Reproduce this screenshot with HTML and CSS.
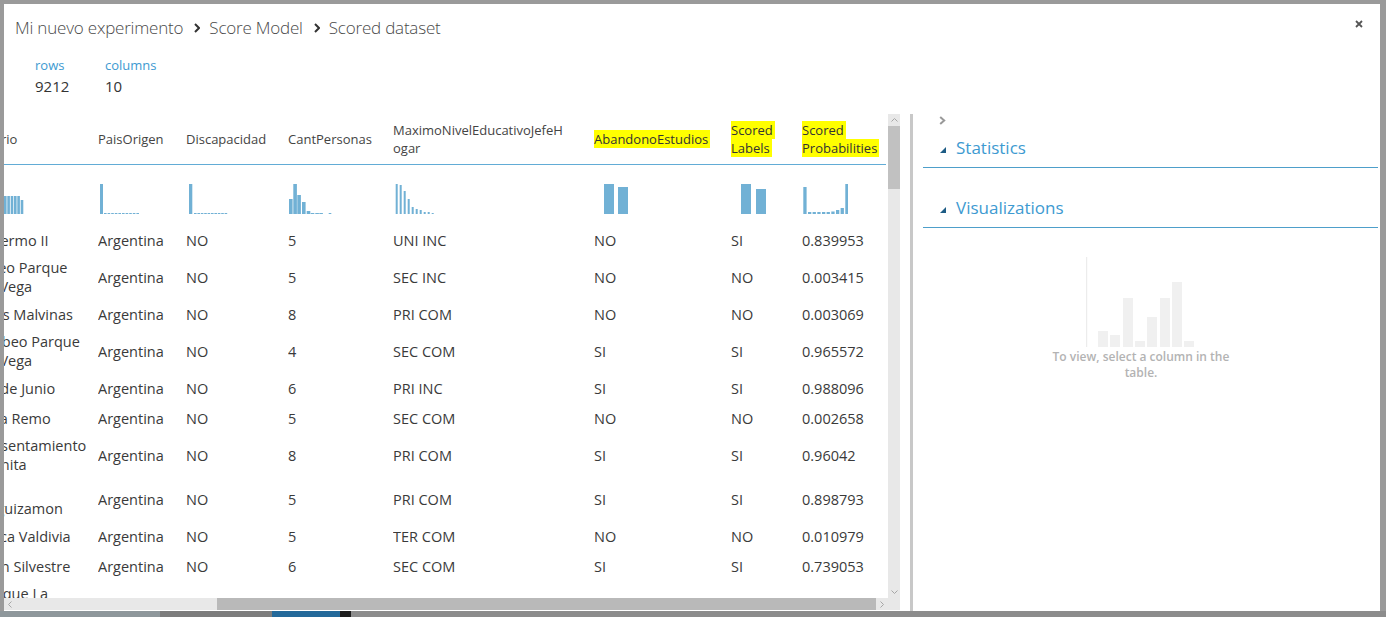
FILE: index.html
```html
<!DOCTYPE html>
<html lang="es">
<head>
<meta charset="utf-8">
<title>Scored dataset</title>
<link rel="stylesheet" href="styles.css">
</head>
<body>
<div class="modal">
  <header class="titlebar">
    <nav class="crumbs">
      <span>Mi nuevo experimento</span>
      <svg class="crumb-sep" width="6" height="10" viewBox="0 0 6 10"><polyline points="1,1 5,5 1,9" fill="none" stroke="#333" stroke-width="2"/></svg>
      <span>Score Model</span>
      <svg class="crumb-sep" width="6" height="10" viewBox="0 0 6 10"><polyline points="1,1 5,5 1,9" fill="none" stroke="#333" stroke-width="2"/></svg>
      <span>Scored dataset</span>
    </nav>
    <button class="close" aria-label="Cerrar"><svg width="8" height="8" viewBox="0 0 8 8"><path d="M1 1 L7 7 M7 1 L1 7" stroke="#555" stroke-width="1.8"/></svg></button>
  </header>

  <div class="stats">
    <div class="stat"><div class="stat-label">rows</div><div class="stat-value">9212</div></div>
    <div class="stat"><div class="stat-label">columns</div><div class="stat-value">10</div></div>
  </div>

  <div class="main">
    <div class="grid-pane">
      <div class="grid-top">
        <div class="viewport">
          <table class="grid">
            <colgroup>
              <col class="c0"><col class="c1"><col class="c2"><col class="c3"><col class="c4"><col class="c5"><col class="c6"><col class="c7">
            </colgroup>
            <thead>
              <tr>
                <th>Barrio</th>
                <th>PaisOrigen</th>
                <th>Discapacidad</th>
                <th>CantPersonas</th>
                <th>MaximoNivelEducativoJefeH<wbr>ogar</th>
                <th><span class="hl">AbandonoEstudios</span></th>
                <th><span class="hl">Scored Labels</span></th>
                <th class="last"><span class="hl">Scored Probabilities</span></th>
              </tr>
            </thead>
            <tbody>
              <tr class="hist">
                <td><svg width="44" height="30"><g fill="#71b1d5"><rect x="4" y="10" width="2.6" height="20"/><rect x="7.3" y="8" width="2.6" height="22"/><rect x="10.7" y="12" width="2.6" height="18"/><rect x="14" y="11" width="2.6" height="19"/><rect x="17.3" y="12" width="2.6" height="18"/><rect x="20.7" y="13" width="2.6" height="17"/><rect x="24" y="12" width="2.6" height="18"/><rect x="27.3" y="12" width="2.6" height="18"/><rect x="30.7" y="12" width="2.6" height="18"/><rect x="34" y="12" width="2.6" height="18"/><rect x="37.3" y="12" width="2.6" height="18"/><rect x="40.7" y="16" width="2.6" height="14"/></g></svg></td>
                <td><svg width="42" height="30"><g fill="#71b1d5"><rect x="2" y="0" width="3" height="30"/><rect x="6" y="29" width="2.6" height="1"/><rect x="9.6" y="29" width="2.6" height="1"/><rect x="13.2" y="29" width="2.6" height="1"/><rect x="16.8" y="29" width="2.6" height="1"/><rect x="20.4" y="29" width="2.6" height="1"/><rect x="24" y="29" width="2.6" height="1"/><rect x="27.6" y="29" width="2.6" height="1"/><rect x="31.2" y="29" width="2.6" height="1"/><rect x="34.8" y="29" width="2.6" height="1"/><rect x="38.4" y="29" width="2.6" height="1"/></g></svg></td>
                <td><svg width="42" height="30"><g fill="#71b1d5"><rect x="3" y="0" width="3.3" height="30"/><rect x="8" y="29" width="2.6" height="1"/><rect x="11.4" y="29" width="2.6" height="1"/><rect x="14.8" y="29" width="2.6" height="1"/><rect x="18.2" y="29" width="2.6" height="1"/><rect x="21.6" y="29" width="2.6" height="1"/><rect x="25" y="29" width="2.6" height="1"/><rect x="28.4" y="29" width="2.6" height="1"/><rect x="31.8" y="29" width="2.6" height="1"/><rect x="35.2" y="29" width="2.6" height="1"/><rect x="38.6" y="29" width="2.6" height="1"/></g></svg></td>
                <td><svg width="45" height="30"><g fill="#71b1d5"><rect x="1" y="15" width="3.6" height="15"/><rect x="5.3" y="0" width="3.6" height="30"/><rect x="9.3" y="11" width="3.6" height="19"/><rect x="14" y="18" width="3.6" height="12"/><rect x="18.7" y="27" width="3.6" height="3"/><rect x="22.7" y="29" width="3.6" height="1"/><rect x="27.3" y="29" width="3.6" height="1"/><rect x="31.3" y="29" width="3.6" height="1"/><rect x="40.7" y="29" width="2.6" height="1"/></g></svg></td>
                <td><svg width="45" height="30"><g fill="#71b1d5"><rect x="2.7" y="0" width="2" height="30"/><rect x="6.7" y="1" width="2" height="29"/><rect x="10.7" y="7" width="2" height="23"/><rect x="14.7" y="15" width="2" height="15"/><rect x="18.7" y="23" width="2" height="7"/><rect x="22.7" y="25" width="2" height="5"/><rect x="26.7" y="26" width="2" height="4"/><rect x="30.7" y="28" width="2" height="2"/><rect x="34.7" y="28" width="2" height="2"/><rect x="38.7" y="29" width="2" height="1"/></g></svg></td>
                <td><svg width="40" height="30"><g fill="#71b1d5"><rect x="10" y="0" width="10" height="30"/><rect x="24" y="3" width="10" height="27"/></g></svg></td>
                <td><svg width="40" height="30"><g fill="#71b1d5"><rect x="10" y="0" width="10" height="30"/><rect x="25" y="5" width="10" height="25"/></g></svg></td>
                <td class="last"><svg width="46" height="30"><g fill="#71b1d5"><rect x="1.3" y="3" width="3.3" height="27"/><rect x="6" y="28" width="3.3" height="2"/><rect x="10.6" y="28" width="3.3" height="2"/><rect x="15.3" y="28" width="3.3" height="2"/><rect x="20" y="28" width="3.3" height="2"/><rect x="24.6" y="28" width="3.3" height="2"/><rect x="29.3" y="27.5" width="3.3" height="2.5"/><rect x="34" y="26" width="3.3" height="4"/><rect x="38.6" y="24" width="3.3" height="6"/><rect x="43.3" y="0" width="3" height="30"/></g></svg></td>
              </tr>
              <tr><td>Palermo II</td><td>Argentina</td><td>NO</td><td>5</td><td>UNI INC</td><td>NO</td><td>SI</td><td class="last">0.839953</td></tr>
              <tr><td>Liceo Parque<br>La Vega</td><td>Argentina</td><td>NO</td><td>5</td><td>SEC INC</td><td>NO</td><td>NO</td><td class="last">0.003415</td></tr>
              <tr><td>Islas Malvinas</td><td>Argentina</td><td>NO</td><td>8</td><td>PRI COM</td><td>NO</td><td>NO</td><td class="last">0.003069</td></tr>
              <tr><td>Mobeo Parque<br>La Vega</td><td>Argentina</td><td>NO</td><td>4</td><td>SEC COM</td><td>SI</td><td>SI</td><td class="last">0.965572</td></tr>
              <tr><td>25 de Junio</td><td>Argentina</td><td>NO</td><td>6</td><td>PRI INC</td><td>SI</td><td>SI</td><td class="last">0.988096</td></tr>
              <tr><td>Villa Remo</td><td>Argentina</td><td>NO</td><td>5</td><td>SEC COM</td><td>NO</td><td>NO</td><td class="last">0.002658</td></tr>
              <tr><td>Masentamiento<br>Juanita</td><td>Argentina</td><td>NO</td><td>8</td><td>PRI COM</td><td>SI</td><td>SI</td><td class="last">0.96042</td></tr>
              <tr><td>El<br>Luguizamon</td><td>Argentina</td><td>NO</td><td>5</td><td>PRI COM</td><td>SI</td><td>SI</td><td class="last">0.898793</td></tr>
              <tr><td>Finca Valdivia</td><td>Argentina</td><td>NO</td><td>5</td><td>TER COM</td><td>NO</td><td>NO</td><td class="last">0.010979</td></tr>
              <tr><td>Juan Silvestre</td><td>Argentina</td><td>NO</td><td>6</td><td>SEC COM</td><td>SI</td><td>SI</td><td class="last">0.739053</td></tr>
              <tr><td>Parque La<br>Flores</td><td></td><td></td><td></td><td></td><td></td><td></td><td class="last"></td></tr>
            </tbody>
          </table>
        </div>
        <div class="vscroll">
          <div class="sarrow"><svg width="7" height="4" viewBox="0 0 7 4"><polyline points="0.5,3.5 3.5,0.5 6.5,3.5" fill="none" stroke="#a6a6a6" stroke-width="1"/></svg></div>
          <div class="vthumb"></div>
          <div class="sfill"></div>
          <div class="sarrow"><svg width="7" height="4" viewBox="0 0 7 4"><polyline points="0.5,0.5 3.5,3.5 6.5,0.5" fill="none" stroke="#a6a6a6" stroke-width="1"/></svg></div>
        </div>
      </div>
      <div class="hscroll">
        <div class="sarrow h"><svg width="4" height="7" viewBox="0 0 4 7"><polyline points="3.5,0.5 0.5,3.5 3.5,6.5" fill="none" stroke="#a6a6a6" stroke-width="1"/></svg></div>
        <div class="hfill"></div>
        <div class="hthumb"></div>
        <div class="sarrow h"><svg width="4" height="7" viewBox="0 0 4 7"><polyline points="0.5,0.5 3.5,3.5 0.5,6.5" fill="none" stroke="#a6a6a6" stroke-width="1"/></svg></div>
        <div class="corner"></div>
      </div>
    </div>

    <div class="divider"></div>

    <aside class="panel">
      <div class="panel-toggle"><svg width="7" height="9" viewBox="0 0 7 9"><polyline points="1.2,1 5.2,4.5 1.2,8" fill="none" stroke="#999" stroke-width="2"/></svg></div>
      <div class="section">
        <svg class="tri" width="6" height="6" viewBox="0 0 6 6"><polygon points="0,6 6,0 6,6" fill="#1d5c85"/></svg>
        <span class="section-title">Statistics</span>
      </div>
      <div class="section second">
        <svg class="tri" width="6" height="6" viewBox="0 0 6 6"><polygon points="0,6 6,0 6,6" fill="#1d5c85"/></svg>
        <span class="section-title">Visualizations</span>
      </div>
      <div class="empty-viz">
        <svg width="190" height="90" viewBox="0 0 190 90">
          <rect x="40" y="0" width="1.2" height="90" fill="#ececec"/>
          <g fill="#f0f0f0">
            <rect x="52" y="74" width="10" height="16"/>
            <rect x="64" y="78" width="10" height="12"/>
            <rect x="77" y="41" width="10" height="49"/>
            <rect x="89" y="84" width="10" height="6"/>
            <rect x="101" y="60" width="10" height="30"/>
            <rect x="114" y="41" width="10" height="49"/>
            <rect x="126" y="25" width="10" height="65"/>
            <rect x="138" y="84" width="10" height="6"/>
          </g>
        </svg>
        <p class="empty-text">To view, select a column in the table.</p>
      </div>
    </aside>
  </div>
</div>
<div class="desk-strip">
  <span class="seg s1"></span><span class="seg s2"></span><span class="seg s3"></span><span class="seg s4"></span><span class="seg s5"></span>
</div>
</body>
</html>
```

FILE: styles.css
```css
html, body {
  margin: 0;
  padding: 0;
}

body {
  width: 1386px;
  height: 617px;
  overflow: hidden;
  background: #9a9a9a;
  font-family: "Segoe UI", "Open Sans", "Noto Sans", sans-serif;
  color: #333;
}

.modal {
  width: 1376px;
  height: 607px;
  margin: 4px 0 0 4px;
  background: #fff;
  display: flex;
  flex-direction: column;
}

/* Title bar */
.titlebar {
  display: flex;
  height: 36px;
  padding: 11px 0 0 11px;
  box-sizing: border-box;
}

.crumbs {
  display: flex;
  align-items: center;
  height: 24px;
  font-size: 17px;
  font-weight: 300;
  letter-spacing: -0.2px;
  color: #4a4a4a;
  white-space: nowrap;
}

.crumb-sep {
  margin: 1px 9px 0 11px;
}

.close {
  margin: 5px 17px 0 auto;
  width: 8px;
  height: 8px;
  padding: 0;
  border: 0;
  background: none;
  display: block;
}

.close svg { display: block; }

/* Stats */
.stats {
  display: flex;
  height: 74px;
  padding: 17px 0 0 31px;
  box-sizing: border-box;
}

.stat { width: 70px; }

.stat-label {
  font-size: 13px;
  line-height: 16px;
  color: #3d9ad1;
}

.stat-value {
  margin-top: 3px;
  font-size: 15px;
  line-height: 20px;
  color: #333;
}

/* Main */
.main {
  display: flex;
  height: 497px;
}

.grid-pane {
  width: 896px;
  display: flex;
  flex-direction: column;
}

.grid-top {
  display: flex;
  height: 484px;
}

.viewport {
  width: 884px;
  height: 484px;
  overflow: hidden;
}

.grid {
  margin-left: -24px;
  border-collapse: separate;
  border-spacing: 0;
  table-layout: fixed;
  width: 906px;
  font-size: 14.5px;
  color: #3a3a3a;
}

.c0 { width: 118px; }
.c1 { width: 88px; }
.c2 { width: 102px; }
.c3 { width: 105px; }
.c4 { width: 201px; }
.c5 { width: 137px; }
.c6 { width: 71px; }
.c7 { width: 84px; }

.grid th {
  height: 50px;
  padding: 0 10px 0 0;
  border-bottom: 1px solid #62acd6;
  font-size: 13px;
  line-height: 18px;
  font-weight: 400;
  color: #444;
  text-align: left;
  vertical-align: middle;
  overflow: hidden;
  white-space: normal;
}

.grid th.last,
.grid td.last { padding-right: 0; }

.hl {
  background: #ffff00;
  color: #333;
  padding: 0 2px;
  margin-left: -2px;
  -webkit-box-decoration-break: clone;
  box-decoration-break: clone;
}

.grid td {
  height: 24px;
  padding: 3px 10px 3px 0;
  line-height: 19px;
  vertical-align: middle;
  white-space: nowrap;
  overflow: hidden;
}

.grid tr.hist td {
  height: 49px;
  padding: 0 0 11px 0;
  vertical-align: bottom;
}

.grid tr.hist svg { display: block; }

/* Scrollbars */
.vscroll {
  width: 12px;
  background: #e8e8e8;
  display: flex;
  flex-direction: column;
}

.sarrow {
  height: 12px;
  flex: none;
  display: flex;
  align-items: center;
  justify-content: center;
}

.sarrow svg { display: block; }

.vthumb {
  height: 63px;
  background: #c1c1c1;
}

.sfill { flex: 1; }

.hscroll {
  height: 12px;
  display: flex;
  background: #e8e8e8;
  border-bottom: 1px solid #fff;
}

.sarrow.h { width: 12px; height: 12px; }

.hfill { width: 201px; }

.hthumb {
  width: 659px;
  background: #b9b9b9;
}

.corner { width: 12px; }

.divider {
  width: 3px;
  margin-left: 10px;
  background: #c8c8c8;
}

/* Right panel */
.panel {
  flex: 1;
  padding: 0 2px 0 10px;
}

.panel-toggle {
  height: 12px;
  padding: 2px 0 0 16px;
  box-sizing: border-box;
}

.panel-toggle svg { display: block; }

.section {
  display: flex;
  align-items: center;
  height: 24px;
  margin-top: 10px;
  padding-bottom: 7px;
  border-bottom: 1px solid #4e9fca;
}

.section.second { margin-top: 28px; }

.tri {
  margin: 4px 0 0 17px;
  display: block;
}

.section-title {
  margin-left: 10px;
  font-size: 17px;
  line-height: 24px;
  color: #3d9ad1;
}

.empty-viz {
  width: 190px;
  margin: 29px 0 0 123px;
}

.empty-viz svg { display: block; }

.empty-text {
  margin: 2px 0 0;
  font-size: 12px;
  line-height: 16px;
  font-weight: 600;
  color: #b3b3b3;
  text-align: center;
}

/* Background page strip under the dialog */
.desk-strip {
  display: flex;
  height: 6px;
}

.seg { display: block; height: 6px; }
.s1 { width: 160px; background: #8e979b; }
.s2 { width: 112px; background: #7d7d7d; }
.s3 { width: 68px; background: #23699a; }
.s4 { width: 11px; background: #1e1e1e; }
.s5 { flex: 1; background: #8c8c8c; }
```
